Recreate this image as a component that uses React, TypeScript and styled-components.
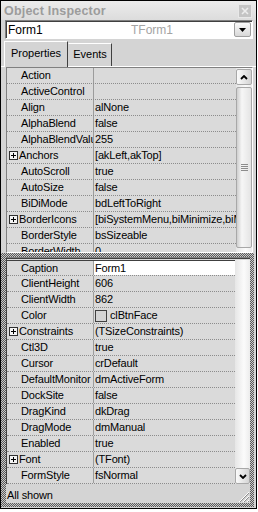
import styled, { createGlobalStyle } from "styled-components";

const FACE = "#d4d4d4";
const GRID = "#dadada";

const GlobalStyle = createGlobalStyle`
  html, body {
    margin: 0;
    padding: 0;
    background: #fff;
  }
  body {
    font-family: "Liberation Sans", Arial, sans-serif;
    font-size: 11px;
    color: #000;
  }
`;

const Window = styled.div`
  width: 257px;
  height: 509px;
  box-sizing: border-box;
  border: 1px solid #000;
  background: ${FACE};
  display: flex;
  flex-direction: column;
  overflow: hidden;
`;

const TitleBar = styled.div`
  height: 19px;
  flex: none;
  display: flex;
  align-items: center;
  justify-content: space-between;
  padding: 0 4px 0 3px;
  background: linear-gradient(#ececec, #dcdcdc);
`;

const Title = styled.span`
  font-weight: bold;
  font-size: 12.5px;
  letter-spacing: 0.2px;
  color: #9c9c9c;
`;

const CloseButton = styled.div`
  width: 14px;
  height: 14px;
  box-sizing: border-box;
  border: 1px solid #e8e8e8;
  background: #c4c4c4;
  display: flex;
  align-items: center;
  justify-content: center;
`;

const Combo = styled.div`
  height: 19px;
  flex: none;
  margin: 0 3px 0 4px;
  box-sizing: border-box;
  border: 1px solid;
  border-color: #808080 #fff #fff #808080;
  box-shadow: inset 1px 1px #404040;
  background: #fff;
  display: flex;
  align-items: center;
`;

const ComboName = styled.span`
  width: 123px;
  padding-left: 2px;
  font-size: 12px;
`;

const ComboType = styled.span`
  flex: 1;
  font-size: 12px;
  color: #a4a4a4;
`;

const DropButton = styled.div`
  width: 17px;
  height: 15px;
  margin-right: 1px;
  box-sizing: border-box;
  border: 1px solid #a0a0a0;
  border-radius: 2px;
  background: linear-gradient(#fafafa, #d8d8d8);
  display: flex;
  align-items: center;
  justify-content: center;
`;

const TabStrip = styled.div`
  height: 28px;
  flex: none;
  box-sizing: border-box;
  padding: 2px 0 0 3px;
  border-bottom: 1px solid #fff;
  display: flex;
  align-items: flex-end;
`;

const Tab = styled.div<{ $active?: boolean }>`
  box-sizing: border-box;
  width: ${(p) => (p.$active ? 64 : 44)}px;
  height: ${(p) => (p.$active ? 26 : 23)}px;
  margin-bottom: ${(p) => (p.$active ? -1 : 0)}px;
  padding-top: ${(p) => (p.$active ? 4 : 3)}px;
  border-style: solid;
  border-width: 1px 1px 0 1px;
  border-color: #fff #404040 transparent ${(p) => (p.$active ? "#fff" : FACE)};
  background: ${FACE};
  text-align: center;
  font-size: 11px;
  line-height: 14px;
`;

const GridPanel = styled.div`
  height: 186px;
  width: 247px;
  flex: none;
  margin-left: 5px;
  box-sizing: border-box;
  border: 1px solid;
  border-color: #808080 #fff #fff #808080;
  background: ${GRID};
  display: flex;
  overflow: hidden;
`;

const Rows = styled.div`
  flex: 1;
  min-width: 0;
  display: flex;
  flex-direction: column;
  letter-spacing: -0.15px;
`;

const Row = styled.div<{ $selected?: boolean }>`
  height: 16px;
  flex: none;
  box-sizing: border-box;
  display: flex;
  border-bottom: 1px dotted #8c8c8c;
  border-top: ${(p) => (p.$selected ? "1px solid #404040" : "none")};
  line-height: 15px;
`;

const NameCell = styled.div<{ $expand?: boolean }>`
  width: 87px;
  flex: none;
  box-sizing: border-box;
  border-right: 1px solid #9c9c9c;
  padding-left: ${(p) => (p.$expand ? 2 : 14)}px;
  display: flex;
  align-items: center;
  gap: 1px;
  overflow: hidden;
  white-space: nowrap;
`;

const ValueCell = styled.div<{ $selected?: boolean }>`
  flex: 1;
  min-width: 0;
  padding-left: 1px;
  display: flex;
  align-items: center;
  gap: 3px;
  overflow: hidden;
  white-space: nowrap;
  background: ${(p) => (p.$selected ? "#fff" : "transparent")};
`;

const PlusBox = styled.span`
  width: 9px;
  height: 9px;
  flex: none;
  box-sizing: border-box;
  border: 1px solid #303030;
  background: #f4f4f4;
  position: relative;
  &::before,
  &::after {
    content: "";
    position: absolute;
    background: #000;
  }
  &::before {
    left: 1px;
    top: 3px;
    width: 5px;
    height: 1px;
  }
  &::after {
    left: 3px;
    top: 1px;
    width: 1px;
    height: 5px;
  }
`;

const Swatch = styled.span`
  width: 12px;
  height: 12px;
  flex: none;
  box-sizing: border-box;
  border: 1px solid #404040;
  background: ${FACE};
`;

const ScrollBar = styled.div<{ $width: number }>`
  width: ${(p) => p.$width}px;
  flex: none;
  display: flex;
  flex-direction: column;
  background: linear-gradient(90deg, #e6e6e6, #fbfbfb 60%, #ececec);
`;

const ScrollButton = styled.div<{ $offset?: number }>`
  height: 16px;
  flex: none;
  margin-top: ${(p) => p.$offset ?? 0}px;
  box-sizing: border-box;
  border: 1px solid #a8a8a8;
  border-radius: 2px;
  background: linear-gradient(90deg, #fbfbfb, #d4d4d4);
  display: flex;
  align-items: center;
  justify-content: center;
`;

const Thumb = styled.div`
  flex: 1;
  margin: 2px 0 4px;
  box-sizing: border-box;
  border: 1px solid #a8a8a8;
  border-radius: 2px;
  background: linear-gradient(90deg, #cfcfcf, #f6f6f6 35%, #e4e4e4);
  display: flex;
  align-items: center;
  justify-content: center;
`;

const Track = styled.div`
  flex: 1;
`;

const Frame = styled.div`
  height: 254px;
  width: 253px;
  flex: none;
  box-sizing: border-box;
  padding: 4px 4px 4px 5px;
  background-color: #c8c8c8;
  background-image: conic-gradient(#5a5a5a 25%, #c8c8c8 0 50%, #5a5a5a 0 75%, #c8c8c8 0);
  background-size: 2px 2px;
`;

const FrameInner = styled.div`
  height: 100%;
  background: ${FACE};
  display: flex;
  flex-direction: column;
`;

const LowerGrid = styled.div`
  height: 227px;
  flex: none;
  box-sizing: border-box;
  border-top: 1px solid #808080;
  border-left: 1px solid #404040;
  box-shadow: inset 0 1px #404040;
  padding-top: 2px;
  background: ${GRID};
  display: flex;
`;

const StatusBar = styled.div`
  flex: 1;
  display: flex;
  justify-content: space-between;
  align-items: flex-end;
  padding-left: 1px;
`;

const StatusText = styled.span`
  align-self: center;
  padding-top: 3px;
  font-size: 11px;
  letter-spacing: -0.15px;
`;

type Prop = { name: string; value?: string; expand?: boolean; swatch?: boolean };

const upperProps: Prop[] = [
  { name: "Action" },
  { name: "ActiveControl" },
  { name: "Align", value: "alNone" },
  { name: "AlphaBlend", value: "false" },
  { name: "AlphaBlendValue", value: "255" },
  { name: "Anchors", value: "[akLeft,akTop]", expand: true },
  { name: "AutoScroll", value: "true" },
  { name: "AutoSize", value: "false" },
  { name: "BiDiMode", value: "bdLeftToRight" },
  { name: "BorderIcons", value: "[biSystemMenu,biMinimize,biMaximize]", expand: true },
  { name: "BorderStyle", value: "bsSizeable" },
  { name: "BorderWidth", value: "0" },
];

const lowerProps: Prop[] = [
  { name: "Caption", value: "Form1" },
  { name: "ClientHeight", value: "606" },
  { name: "ClientWidth", value: "862" },
  { name: "Color", value: "clBtnFace", swatch: true },
  { name: "Constraints", value: "(TSizeConstraints)", expand: true },
  { name: "Ctl3D", value: "true" },
  { name: "Cursor", value: "crDefault" },
  { name: "DefaultMonitor", value: "dmActiveForm" },
  { name: "DockSite", value: "false" },
  { name: "DragKind", value: "dkDrag" },
  { name: "DragMode", value: "dmManual" },
  { name: "Enabled", value: "true" },
  { name: "Font", value: "(TFont)", expand: true },
  { name: "FormStyle", value: "fsNormal" },
];

function Chevron({ down }: { down?: boolean }) {
  return (
    <svg width="8" height="5" viewBox="0 0 8 5">
      <path
        d={down ? "M1 1 L4 4 L7 1" : "M1 4 L4 1 L7 4"}
        fill="none"
        stroke="#000"
        strokeWidth="1.8"
      />
    </svg>
  );
}

function PropRow({ prop, selected }: { prop: Prop; selected?: boolean }) {
  return (
    <Row $selected={selected}>
      <NameCell $expand={prop.expand}>
        {prop.expand && <PlusBox />}
        {prop.name}
      </NameCell>
      <ValueCell $selected={selected}>
        {prop.swatch && <Swatch />}
        {prop.value}
      </ValueCell>
    </Row>
  );
}

export default function App() {
  return (
    <>
      <GlobalStyle />
      <Window>
        <TitleBar>
          <Title>Object Inspector</Title>
          <CloseButton>
            <svg width="8" height="8" viewBox="0 0 8 8">
              <path d="M1 1 L7 7 M7 1 L1 7" stroke="#ededed" strokeWidth="1.6" />
            </svg>
          </CloseButton>
        </TitleBar>
        <Combo>
          <ComboName>Form1</ComboName>
          <ComboType>TForm1</ComboType>
          <DropButton>
            <svg width="7" height="4" viewBox="0 0 7 4">
              <path d="M0 0 H7 L3.5 4 Z" fill="#000" />
            </svg>
          </DropButton>
        </Combo>
        <TabStrip>
          <Tab $active>Properties</Tab>
          <Tab>Events</Tab>
        </TabStrip>
        <GridPanel>
          <Rows>
            {upperProps.map((p) => (
              <PropRow key={p.name} prop={p} />
            ))}
          </Rows>
          <ScrollBar $width={16}>
            <ScrollButton $offset={1}>
              <Chevron />
            </ScrollButton>
            <Thumb>
              <svg width="7" height="7" viewBox="0 0 7 7">
                <path d="M0 0.5 H7 M0 2.5 H7 M0 4.5 H7 M0 6.5 H7" stroke="#8c8c8c" strokeWidth="1" />
              </svg>
            </Thumb>
          </ScrollBar>
        </GridPanel>
        <Frame>
          <FrameInner>
            <LowerGrid>
              <Rows>
                {lowerProps.map((p, i) => (
                  <PropRow key={p.name} prop={p} selected={i === 0} />
                ))}
              </Rows>
              <ScrollBar $width={15}>
                <Track />
                <ScrollButton>
                  <Chevron down />
                </ScrollButton>
              </ScrollBar>
            </LowerGrid>
            <StatusBar>
              <StatusText>All shown</StatusText>
              <svg width="13" height="13" viewBox="0 0 13 13">
                <path d="M12 2 L2 12 M12 6 L6 12 M12 10 L10 12" stroke="#fff" strokeWidth="1" />
                <path d="M12 3 L3 12 M12 7 L7 12 M12 11 L11 12" stroke="#8c8c8c" strokeWidth="1" />
              </svg>
            </StatusBar>
          </FrameInner>
        </Frame>
      </Window>
    </>
  );
}
